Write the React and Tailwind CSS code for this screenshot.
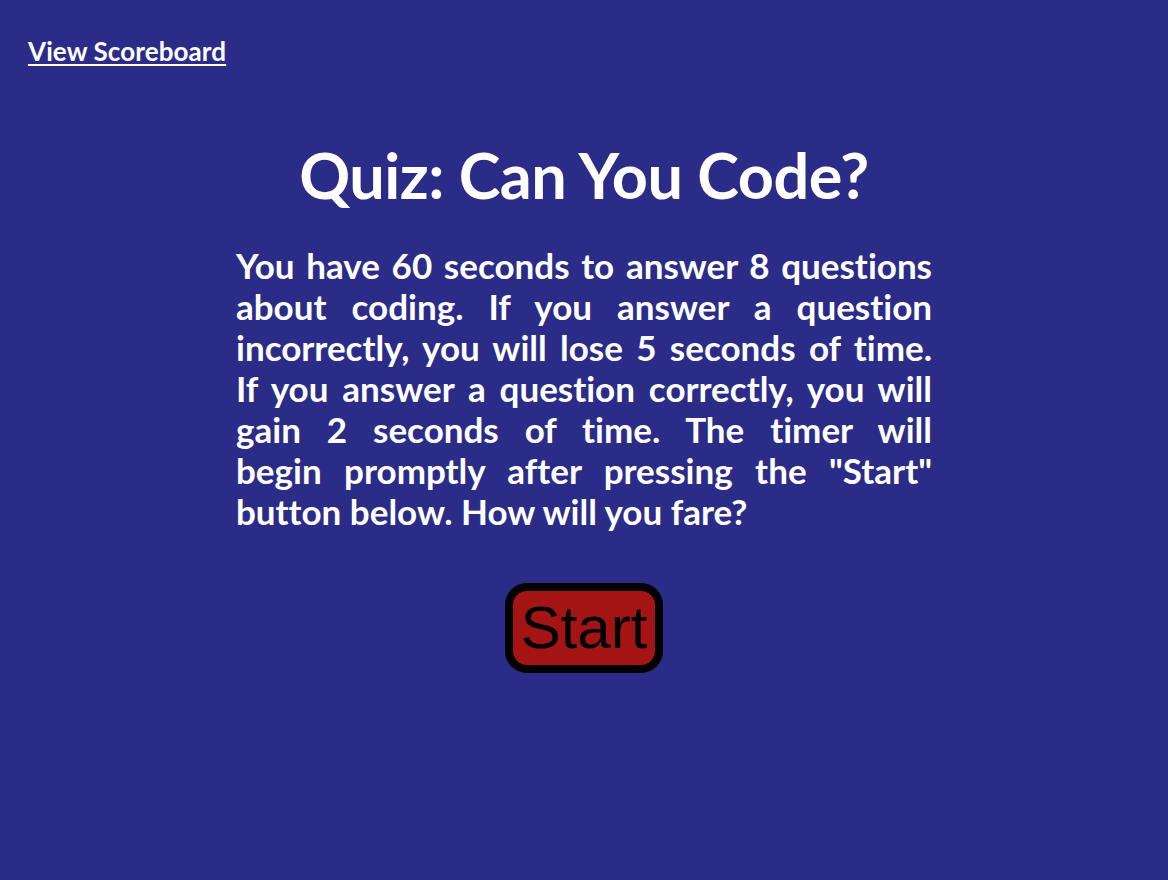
const lines = [
  'You have 60 seconds to answer 8 questions',
  'about coding. If you answer a question',
  'incorrectly, you will lose 5 seconds of time.',
  'If you answer a question correctly, you will',
  'gain 2 seconds of time. The timer will',
  'begin promptly after pressing the "Start"',
];

export default function App() {
  return (
    <div className="min-h-[880px] w-full bg-[#2b2c88] text-white [font-variant-ligatures:none]" style={{ fontFamily: 'Lato, "Open Sans", sans-serif' }}>
      <div className="px-[28px] pt-[35px]">
        <a href="#" className="text-[26px] font-bold leading-[32px] tracking-[0.1px] underline decoration-2 underline-offset-[3px]">View Scoreboard</a>
      </div>
      <div className="flex flex-col items-center">
        <h1 className="mt-[73px] text-[63px] font-bold leading-[70px] tracking-[-0.5px]">Quiz: Can You Code?</h1>
        <p className="mt-[35px] w-[696px] text-[35px] font-bold leading-[41px]">
          {lines.map((l) => (
            <span key={l} className="block text-justify [text-align-last:justify]">{l}</span>
          ))}
          <span className="block">button below. How will you fare?</span>
        </p>
        <button className="mt-[51px] h-[90px] w-[158px] rounded-[22px] border-[8px] border-black bg-[#a51415] text-[60px] leading-none text-black" style={{ fontFamily: '"Liberation Sans", Arial, sans-serif' }}>
          Start
        </button>
      </div>
    </div>
  );
}
